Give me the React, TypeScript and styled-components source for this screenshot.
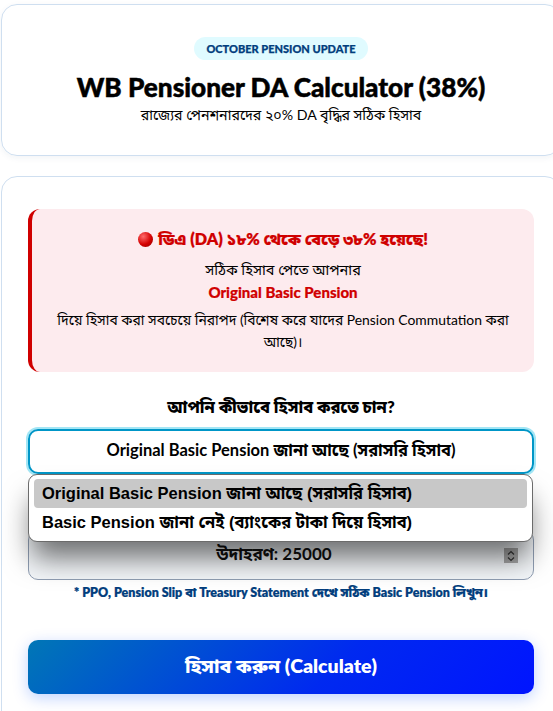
import styled, { createGlobalStyle } from "styled-components";

const GlobalStyle = createGlobalStyle`
  html, body {
    margin: 0;
    padding: 0;
    width: 553px;
    height: 711px;
    overflow: hidden;
    background: #fff;
  }
  body {
    font-family: "Lato", "Noto Sans Bengali", "Noto Sans", "DejaVu Sans", sans-serif;
    color: #000;
  }
`;

const Page = styled.main`
  width: 560px;
  padding: 4px 0 0 1px;
  display: flex;
  flex-direction: column;
  gap: 20px;
`;

const HeaderCard = styled.header`
  box-sizing: border-box;
  width: 560px;
  height: 152px;
  padding: 32px 20px 0;
  border: 1px solid #cfdff0;
  border-radius: 16px;
  box-shadow: 0 2px 6px rgba(30, 60, 110, 0.06);
  display: flex;
  flex-direction: column;
  align-items: center;
`;

const Badge = styled.span`
  padding: 0 12px;
  height: 23px;
  line-height: 23px;
  border-radius: 12px;
  background: #e0fbff;
  color: #023e7d;
  font-size: 11px;
  font-weight: 900;
  -webkit-text-stroke: 0.25px #023e7d;
`;

const Title = styled.h1`
  margin: 11px 0 0;
  font-size: 26.2px;
  line-height: 32px;
  font-weight: 900;
  -webkit-text-stroke: 0.5px #000;
`;

const Subtitle = styled.p`
  margin: 0;
  font-size: 14.2px;
  line-height: 24px;
`;

const FormCard = styled.section`
  box-sizing: border-box;
  width: 560px;
  height: 600px;
  padding: 32px 26px 0;
  border: 1px solid #cfdff0;
  border-radius: 16px;
  position: relative;
`;

const Alert = styled.div`
  box-sizing: border-box;
  height: 163px;
  padding: 18px 16px 0;
  border-left: 4px solid #d00000;
  border-radius: 12px;
  background: #fdebee;
  text-align: center;
  font-size: 13.9px;
`;

const AlertTitle = styled.div`
  display: flex;
  justify-content: center;
  align-items: center;
  gap: 5px;
  color: #d00000;
  font-size: 16.2px;
  font-weight: 800;
  line-height: 24px;
  -webkit-text-stroke: 0.2px #d00000;
`;

const RedDot = styled.i`
  width: 15px;
  height: 15px;
  border-radius: 50%;
  background: radial-gradient(circle at 35% 30%, #ff6b6b, #d40000 55%, #8e0000);
`;

const AlertLead = styled.div`
  margin-top: 6px;
  font-size: 14.5px;
  line-height: 25px;
`;

const AlertStrong = styled.div`
  color: #d00000;
  font-size: 15px;
  font-weight: 900;
  line-height: 20px;
  -webkit-text-stroke: 0.2px #d00000;
`;

const AlertBody = styled.div`
  margin-top: 7px;
  line-height: 22px;
`;

const FieldLabel = styled.div`
  margin-top: 21px;
  text-align: center;
  font-size: 16.5px;
  font-weight: 800;
  line-height: 28px;
`;

const SelectBox = styled.div`
  box-sizing: border-box;
  height: 45px;
  margin-top: 8px;
  border: 2px solid #0096c7;
  border-radius: 10px;
  box-shadow: 0 0 0 2px #a3e6f5;
  display: flex;
  align-items: center;
  justify-content: center;
  font-size: 16.5px;
  font-weight: 700;
`;

const NumberBox = styled.div`
  box-sizing: border-box;
  height: 50px;
  margin-top: 56px;
  padding-right: 14px;
  border: 1px solid #8f9db2;
  border-radius: 10px;
  background: #f3f6f9;
  display: flex;
  align-items: center;
  justify-content: center;
  font-size: 17px;
  font-weight: 700;
  color: #111;
  position: relative;
`;

const Spinner = styled.span`
  position: absolute;
  right: 15px;
  top: 17px;
  width: 14px;
  height: 15px;
  background: #a8a8a8;
  display: flex;
  align-items: center;
  justify-content: center;
`;

const Hint = styled.p`
  margin: 3px 0 0;
  text-align: center;
  color: #023e7d;
  font-size: 12.5px;
  font-weight: 800;
  line-height: 20px;
  -webkit-text-stroke: 0.2px #023e7d;
`;

const CalcButton = styled.button`
  display: block;
  width: 100%;
  height: 54px;
  margin-top: 37px;
  border: 0;
  border-radius: 10px;
  background: linear-gradient(135deg, #0077b6, #0029f0 60%, #0014ff);
  box-shadow: 0 4px 15px rgba(0, 80, 255, 0.25);
  color: #fff;
  font: inherit;
  font-size: 19.5px;
  font-weight: 800;
`;

const Popup = styled.div`
  position: absolute;
  left: 26px;
  top: 297px;
  width: 505px;
  height: 68px;
  box-sizing: border-box;
  padding: 4px 5px;
  border: 1px solid #6b6b6b;
  border-radius: 9px;
  background: #fff;
  box-shadow: 0 20px 28px -4px rgba(0, 0, 0, 0.55);
  font-family: "Liberation Sans", "Noto Sans Bengali", "Noto Sans", sans-serif;
  font-size: 16.5px;
  font-weight: 700;
`;

const PopupOption = styled.div<{ $active?: boolean }>`
  height: 29px;
  padding: 0 8px;
  border-radius: 4px;
  line-height: 29px;
  background: ${({ $active }) => ($active ? "#c8c8c8" : "transparent")};
`;

export default function App() {
  return (
    <>
      <GlobalStyle />
      <Page>
        <HeaderCard>
          <Badge>OCTOBER PENSION UPDATE</Badge>
          <Title>WB Pensioner DA Calculator (38%)</Title>
          <Subtitle>রাজ্যের পেনশনারদের ২০% DA বৃদ্ধির সঠিক হিসাব</Subtitle>
        </HeaderCard>
        <FormCard>
          <Alert>
            <AlertTitle>
              <RedDot />
              ডিএ (DA) ১৮% থেকে বেড়ে ৩৮% হয়েছে!
            </AlertTitle>
            <AlertLead>সঠিক হিসাব পেতে আপনার</AlertLead>
            <AlertStrong>Original Basic Pension</AlertStrong>
            <AlertBody>দিয়ে হিসাব করা সবচেয়ে নিরাপদ (বিশেষ করে যাদের Pension Commutation করা আছে)।</AlertBody>
          </Alert>
          <FieldLabel>আপনি কীভাবে হিসাব করতে চান?</FieldLabel>
          <SelectBox>Original Basic Pension জানা আছে (সরাসরি হিসাব)</SelectBox>
          <NumberBox>
            উদাহরণ: 25000
            <Spinner>
              <svg width="8" height="12" viewBox="0 0 8 12" fill="none" stroke="#333" strokeWidth="1.2">
                <path d="M1 4.5 4 1.5 7 4.5M1 7.5 4 10.5 7 7.5" />
              </svg>
            </Spinner>
          </NumberBox>
          <Hint>* PPO, Pension Slip বা Treasury Statement দেখে সঠিক Basic Pension লিখুন।</Hint>
          <CalcButton>হিসাব করুন (Calculate)</CalcButton>
          <Popup>
            <PopupOption $active>Original Basic Pension জানা আছে (সরাসরি হিসাব)</PopupOption>
            <PopupOption>Basic Pension জানা নেই (ব্যাংকের টাকা দিয়ে হিসাব)</PopupOption>
          </Popup>
        </FormCard>
      </Page>
    </>
  );
}
